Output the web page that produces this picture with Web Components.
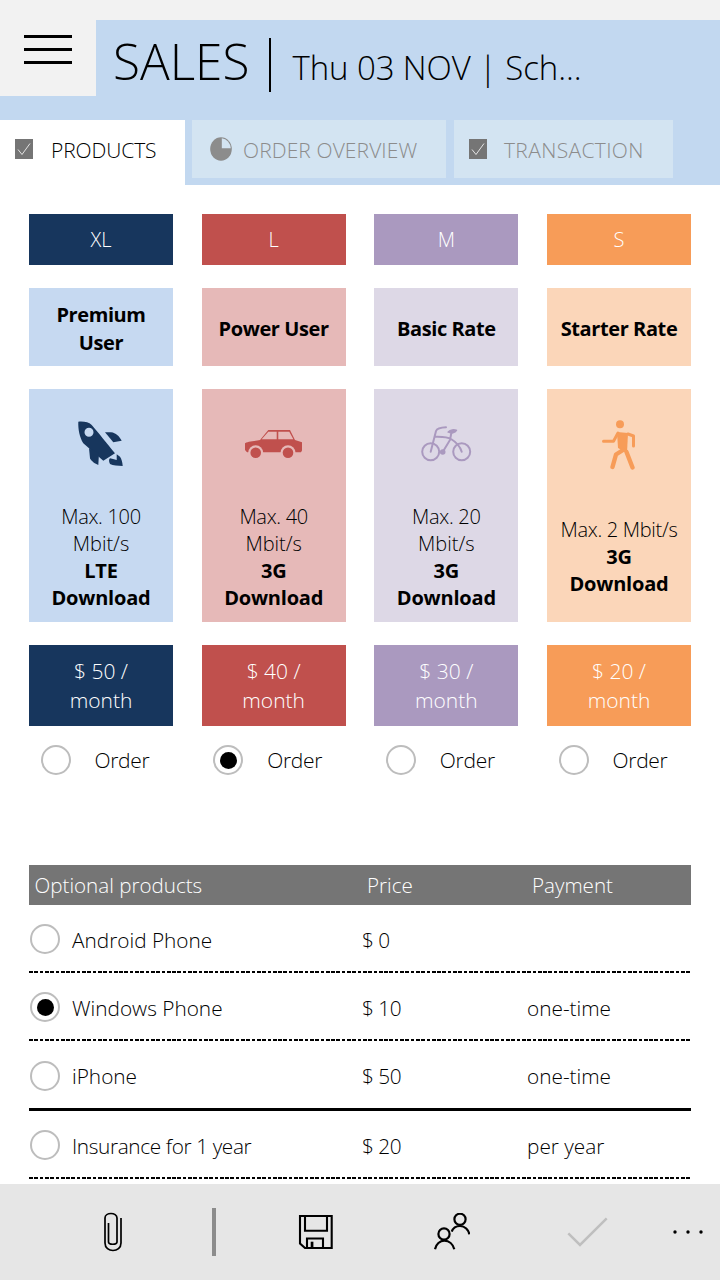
<!DOCTYPE html>
<html lang="en"><head><meta charset="utf-8"><title>Sales</title>
<style>
html,body{margin:0;padding:0;background:#fff}
body{width:720px;height:1280px;overflow:hidden;font-family:"Open Sans","Noto Sans",sans-serif;font-weight:300;color:#000;display:flex;flex-direction:column}
</style></head><body>
<sales-header></sales-header>
<sales-tabs>
<sales-tab active icon="check" label="PRODUCTS"></sales-tab>
<sales-tab icon="pie" label="ORDER OVERVIEW"></sales-tab>
<sales-tab icon="check" label="TRANSACTION"></sales-tab>
</sales-tabs>
<plan-grid></plan-grid>
<options-table>
<option-row name="Android Phone" price="$ 0" pay="" line="dashed" h="68"></option-row>
<option-row name="Windows Phone" price="$ 10" pay="one-time" line="dashed" selected h="68"></option-row>
<option-row name="iPhone" price="$ 50" pay="one-time" line="solid" h="70"></option-row>
<option-row name="Insurance for 1 year" price="$ 20" pay="per year" line="dashed" h="68" ls="-.38"></option-row>
</options-table>
<app-bar></app-bar>
<script>
function def(name,css,html){customElements.define(name,class extends HTMLElement{connectedCallback(){if(this.shadowRoot)return;const r=this.attachShadow({mode:"open"});r.innerHTML="<style>"+css+"</style>"+html;}});}
const IC={
check:'<svg width="18" height="20" viewBox="0 0 18 20"><rect width="18" height="20" fill="#757575"/><path d="M3 10.500l4 5 8-11" fill="none" stroke="#fff" stroke-width=".8"/></svg>',
pie:'<svg width="22" height="24" viewBox="0 0 22 24"><ellipse cx="11" cy="12" rx="10.800" ry="11.800" fill="#8c8c8c"/><path d="M11.800 1.200A10 10.800 0 0 1 20.800 11.200H11.800z" fill="#d3e4f2"/></svg>',
rocket:'<svg width="46" height="46" viewBox="0 0 46 46" fill="#17365d"><path fill-rule="evenodd" d="M.3 .7C6 .3 10.500 1 13.700 4 20 11 30 24 37 32.300L25.300 39.700 5.300 22.300C1.500 16 0 8 .3 .7ZM11 6.800A4.500 4.500 0 1 0 11 15.800 4.500 4.500 0 0 0 11 6.800Z"/><path d="M27 11.300H33C38 12 41 15 43.700 19.700L35.300 21.300Z"/><path d="M11 27.300 21 32.300 20.300 44C15 42 12 38 12 37.300Z"/><path d="M42 35.700C43.500 38 44.500 41 44.700 45 40 44.500 35 44.500 32 43 30.500 40 31 38 32 37.300L36 38.300 38.700 39 38.700 33.300Z"/></svg>',
car:'<svg width="58" height="30" viewBox="0 0 58 30" fill="#c0504d"><path fill-rule="evenodd" d="M23.300 1H45L50 11 57 13.300V21.500L56 23.300H2L0 21V14.300C1 12.500 10 12 15 11ZM16.700 10.300H31.700V2.700H23.300ZM33.300 2.700V10.300H48.300L44.300 2.700Z"/><circle cx="10.700" cy="23.700" r="7.500" fill="#e6b9b8"/><circle cx="43" cy="23.700" r="7.500" fill="#e6b9b8"/><path d="M0 24H20V30H0ZM33 24H58V30H33Z" fill="#e6b9b8"/><circle cx="10.700" cy="23.700" r="5.300"/><circle cx="43" cy="23.700" r="5.300"/></svg>',
bike:'<svg width="52" height="36" viewBox="0 0 52 36" fill="none" stroke="#aa99bf" stroke-width="2" stroke-linecap="round"><circle cx="10.700" cy="25.700" r="8.500"/><circle cx="41.700" cy="25.700" r="8.500"/><path d="M10.700 25.700 16 5C17 2.500 20 1.500 26 1.300M15 10.700C22 10.500 28 11 31 13 36 16 40 20 41.700 25.700M31.300 7.300 30 14 22.700 26"/><path d="M28.700 6C30.500 4 34 3.500 36 4.500 35 6.500 31 7.300 28.700 6Z" fill="#aa99bf"/><circle cx="22.700" cy="26" r="2.800" fill="#aa99bf" stroke="none"/></svg>',
walk:'<svg width="34" height="50" viewBox="0 0 34 50" fill="none" stroke="#f79c58" stroke-width="3" stroke-linecap="round" stroke-linejoin="round"><circle cx="18" cy="4.300" r="4" fill="#f79c58" stroke="none"/><path d="M1.500 21.300H11.500L16 13"/><path d="M26 14 31.500 16V26"/><path d="M15 12 26 13 25 33 16 28Z" fill="#f79c58" stroke="none"/><path d="M24.500 32 30.500 47.500M21 30 14 34.500 10.500 47" stroke-width="4.400"/></svg>',
clip:'<svg width="20" height="40" viewBox="0 0 20 40" fill="none" stroke="#000" stroke-width="1.700"><path d="M5.500 11V30C5.500 33 14 33 14 30V6C14 0 2 0 2 6V31C2 41 18 41 18 31V6"/></svg>',
save:'<svg width="36" height="36" viewBox="0 0 36 36" fill="none" stroke="#000" stroke-width="2.100"><path d="M2 2H33.700V34H7L2 29.500Z"/><path d="M7 2V16.700H29V2M9 34V24.500H25V34"/><rect x="12.700" y="27.700" width="2.700" height="6" fill="#000" stroke="none"/></svg>',
people:'<svg width="36" height="38" viewBox="0 0 36 38" fill="none" stroke="#000" stroke-width="2.200"><circle cx="26" cy="6.300" r="5.600"/><circle cx="10" cy="21" r="5.600"/><path d="M1 36.300C2 31 6 27.700 10.300 27.700 15 27.700 19 31 20.300 36.300M17.700 18.700C19 15 22.500 13 26 13 31 13 34.500 17 35.300 21.300"/></svg>',
tick:'<svg width="42" height="30" viewBox="0 0 42 30" fill="none" stroke="#bfbfbf" stroke-width="2.500"><path d="M1.300 16.300 13 28 39.700 1.300"/></svg>',
dots:'<svg width="30" height="4" viewBox="0 0 30 4" fill="#000"><circle cx="2" cy="2" r="1.700"/><circle cx="15" cy="2" r="1.700"/><circle cx="28" cy="2" r="1.700"/></svg>'
};
def("sales-header",":host{display:flex;height:96px;background:linear-gradient(#f2f2f2 20px,#c2d8f0 20px);position:relative;flex:none}.m{width:96px;height:96px;background:#f2f2f2;display:flex;flex-direction:column;gap:10px;align-items:center;padding-top:35px;box-sizing:border-box}.m i{display:block;width:48px;height:3px;background:#000}.t{display:flex;align-items:baseline;padding:31px 0 0 17px;white-space:nowrap;line-height:60px;height:60px}.a{font-size:49.500px}.b{font-size:33px;margin-left:21px;letter-spacing:-.1px}.s{width:2px;height:54px;background:#000;margin-left:20px;align-self:flex-start;margin-top:7px}",
'<div class="m"><i></i><i></i><i></i></div><div class="t"><span class="a">SALES</span><span class="s"></span><span class="b">Thu 03 NOV | Sch...</span></div>');
def("sales-tabs",":host{display:flex;height:89px;background:#c2d8f0;padding-top:24px;box-sizing:border-box;flex:none;gap:8px}","<slot></slot>");
customElements.define("sales-tab",class extends HTMLElement{connectedCallback(){const a=this.hasAttribute("active"),l=this.getAttribute("label"),o=l.startsWith("O"),t=l.startsWith("T"),ic=IC[this.getAttribute("icon")];const r=this.attachShadow({mode:"open"});
const w=a?185:(o?254:219);
r.innerHTML=`<style>:host{display:flex;align-items:center;height:${a?65:58}px;width:${w}px;margin-right:${a?-1:0}px;background:${a?"#fff":"#d3e4f2"};color:${a?"#000":"#8c8c8c"};font-size:21px;box-sizing:border-box;padding-left:${a?15:(o?18:15)}px;flex:none}span{margin-left:${a?18:(o?11:17)}px;padding:${a?0:2}px 0 ${a?5:0}px;letter-spacing:${t?.35:o?.1:-.1}px}svg{display:block}.i{margin-bottom:${a?7:0}px}</style><div class="i">${ic}</div><span>${l}</span>`;}});
const P=[
["XL","#17365d","#c6d9f1",["Premium","User"],"rocket",["Max. 100","Mbit/s"],["LTE","Download"],"$ 50 /",false,32],
["L","#c0504d","#e6b9b8",["Power User"],"car",["Max. 40","Mbit/s"],["3G","Download"],"$ 40 /",true,40],
["M","#aa99bf","#ddd8e6",["Basic Rate"],"bike",["Max. 20","Mbit/s"],["3G","Download"],"$ 30 /",false,37],
["S","#f79c58","#fbd6b9",["Starter Rate"],"walk",["Max. 2 Mbit/s"],["3G","Download"],"$ 20 /",false,31]];
customElements.define("radio-dot",class extends HTMLElement{connectedCallback(){const r=this.attachShadow({mode:"open"});r.innerHTML=`<style>:host{display:flex;align-items:center;justify-content:center;width:30px;height:30px;box-sizing:border-box;border:2px solid #bdbdbd;border-radius:50%;flex:none;background:#fff}i{display:block;width:17px;height:17px;border-radius:50%;background:#000}</style>${this.hasAttribute("on")?"<i></i>":""}`;}});
customElements.define("plan-grid",class extends HTMLElement{connectedCallback(){const r=this.attachShadow({mode:"open"});
r.innerHTML=`<style>:host{display:grid;grid-template-columns:repeat(4,1fr);column-gap:28.700px;grid-template-rows:51px 78px 233px 81px;row-gap:23px;padding:29px 29px 0;flex:none;text-align:center;font-size:20px}
.c{display:flex;align-items:center;justify-content:center;flex-direction:column}
.w{color:#fff}.h{font-weight:700;line-height:28px;color:#000;letter-spacing:-.4px;padding-top:3px;box-sizing:border-box}
.f{justify-content:flex-start;line-height:27px;color:#000}.f b{font-weight:700;letter-spacing:-.2px}.ic{display:flex;justify-content:center;align-items:flex-start;flex:none}.tx{flex:1;display:flex;flex-direction:column;justify-content:center;padding-top:2px}.tx span:first-child{letter-spacing:-.3px}
.p{line-height:29px;font-size:21px}
.o{display:flex;align-items:center;margin-top:-4px;height:30px;font-size:21px;padding-left:11.500px}.o span{margin-left:24px;letter-spacing:-.3px}
</style>`+
P.map(p=>`<div class="c w" style="background:${p[1]}">${p[0]}</div>`).join("")+
P.map(p=>`<div class="c h" style="background:${p[2]}">${p[3].map(x=>`<span>${x}</span>`).join("")}</div>`).join("")+
P.map(p=>`<div class="c f" style="background:${p[2]}"><div class="ic" style="padding-top:${p[9]}px;height:${100-p[9]}px">${IC[p[4]]}</div><div class="tx">${p[5].map(x=>`<span>${x}</span>`).join("")}${p[6].map(x=>`<b>${x}</b>`).join("")}</div></div>`).join("")+
P.map(p=>`<div class="c w p" style="background:${p[1]}"><span>${p[7]}</span><span>month</span></div>`).join("")+
P.map(p=>`<div class="o"><radio-dot ${p[8]?"on":""}></radio-dot><span>Order</span></div>`).join("");}});
customElements.define("options-table",class extends HTMLElement{connectedCallback(){const r=this.attachShadow({mode:"open"});
r.innerHTML=`<style>:host{display:block;margin:90px 29px 0;flex:1;min-height:0;overflow:hidden;font-size:20.600px}.h{display:grid;grid-template-columns:333px 165px 1fr;height:40px;line-height:41px;background:#757575;color:#fff}.h span:first-child{padding-left:5.500px}.h span:nth-child(2),.h span:nth-child(3){padding-left:5px}</style><div class="h"><span>Optional products</span><span>Price</span><span>Payment</span></div><slot></slot>`;}});
customElements.define("option-row",class extends HTMLElement{connectedCallback(){const g=k=>this.getAttribute(k),r=this.attachShadow({mode:"open"});const solid=g("line")==="solid";
r.innerHTML=`<style>:host{display:grid;grid-template-columns:333px 165px 1fr;align-items:center;height:${g("h")}px;box-sizing:border-box;font-size:20.800px;padding:2px 0 ${solid?3:2}px;background:${solid?"linear-gradient(#000,#000)":"repeating-linear-gradient(90deg,#000 0 3.700px,transparent 3.700px 5.300px)"} bottom/100% ${solid?3:2}px no-repeat}.n{display:flex;align-items:center;gap:12px;padding-left:1px}.t{padding-top:1px}.pr{letter-spacing:-.5px}</style><div class="n"><radio-dot ${this.hasAttribute("selected")?"on":""}></radio-dot><span class="t" style="letter-spacing:${g("ls")||0}px">${g("name")}</span></div><span class="pr t">${g("price")}</span><span class="t">${g("pay")}</span>`;}});
def("app-bar",":host{display:flex;align-items:center;flex:none;height:96px;background:#e6e6e6}.a{display:flex;justify-content:center;width:80px;flex:none}.d{width:4px;height:48px;background:#8c8c8c;flex:none}",
`<div class="a" style="margin-left:73px">${IC.clip}</div><div class="d" style="margin-left:59px"></div><div class="a" style="margin-left:60px">${IC.save}</div><div class="a" style="margin-left:56px">${IC.people}</div><div class="a" style="margin-left:56px">${IC.tick}</div><div class="a" style="margin-left:40px;width:40px">${IC.dots}</div>`);
</script>
</body></html>
